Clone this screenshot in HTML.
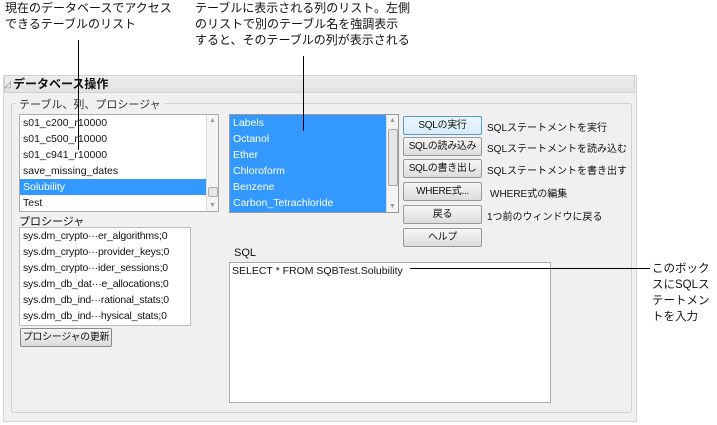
<!DOCTYPE html>
<html><head><meta charset="utf-8"><style>
*{box-sizing:border-box;margin:0;padding:0}
body{width:717px;height:425px;background:#fff;position:relative;overflow:hidden;font-family:"Liberation Sans","Noto Sans CJK JP",sans-serif;font-size:11px;color:#111}
.a{position:absolute}
.ann{font-size:12px;line-height:16px;color:#111;white-space:nowrap}
.vl{position:absolute;width:1px;background:#000}
.list{position:absolute;background:#fff;border:1px solid #aaa;overflow:hidden}
.r{height:16px;line-height:16px;padding-left:3px;white-space:nowrap;overflow:hidden;font-size:10.5px}
.sel{background:#3399ff;color:#fff}
.sb{position:absolute;top:0;right:0;bottom:0;width:12px;background:#f4f4f4;border-left:1px solid #ddd;font-size:7px;color:#999;text-align:center}
.th{position:absolute;left:1px;width:10px;border:1px solid #aaa;background:#e6e6e6;border-radius:2px}
.btn{position:absolute;left:403px;width:79px;height:19px;border:1px solid #999;border-radius:2px;background:linear-gradient(#f6f6f6,#dcdcdc);text-align:center;line-height:17px;font-size:10px;white-space:nowrap;letter-spacing:-0.3px}
.lbl{position:absolute;left:487px;font-size:10px;white-space:nowrap}
</style></head><body>
<div class="a ann" style="left:5px;top:0">現在のデータベースでアクセス<br>できるテーブルのリスト</div>
<div class="a ann" style="left:195px;top:0">テーブルに表示される列のリスト。左側<br>のリストで別のテーブル名を強調表示<br>すると、そのテーブルの列が表示される</div>

<div class="a" style="left:3px;top:75px;width:634px;height:347px;background:#f0f0f0;border:1px solid #d6d6d6"></div>
<div class="a" style="left:4px;top:75px;width:631px;height:18px;background:linear-gradient(#ededed,#e2e2e2);border:1px solid #d0d0d0"></div>
<div class="a" style="left:4px;top:75px;font-size:9px;color:#888;line-height:18px">◿</div>
<div class="a" style="left:13px;top:76px;font-size:12px;font-weight:bold;line-height:16px">データベース操作</div>
<div class="a" style="left:11px;top:103px;width:621px;height:310px;border:1px solid #d0d0d0;border-radius:3px"></div>
<div class="a" style="left:16px;top:96px;background:#f0f0f0;padding:0 3px;font-size:11px;color:#333">テーブル、列、プロシージャ</div>

<div class="list" style="left:19px;top:114px;width:200px;height:98px">
<div class="r">s01_c200_r10000</div><div class="r">s01_c500_r10000</div><div class="r">s01_c941_r10000</div><div class="r">save_missing_dates</div><div class="r sel" style="margin-right:12px">Solubility</div><div class="r">Test</div>
<div class="sb"><div style="margin-top:2px">▲</div><div class="th" style="top:72px;height:10px"></div><div style="position:absolute;bottom:2px;width:11px">▼</div></div>
</div>

<div class="list" style="left:229px;top:114px;width:170px;height:99px;background:#3399ff;border-color:#999">
<div class="r sel">Labels</div><div class="r sel">Octanol</div><div class="r sel">Ether</div><div class="r sel">Chloroform</div><div class="r sel">Benzene</div><div class="r sel">Carbon_Tetrachloride</div>
<div class="sb"><div style="margin-top:2px">▲</div><div class="th" style="top:14px;height:57px"></div><div style="position:absolute;bottom:2px;width:11px">▼</div></div>
</div>

<div class="btn" style="top:116px;border-color:#5a9ec8;background:linear-gradient(#eaf6fd,#d6ecf8)">SQLの実行</div>
<div class="btn" style="top:137px">SQLの読み込み</div>
<div class="btn" style="top:159px">SQLの書き出し</div>
<div class="btn" style="top:182px">WHERE式...</div>
<div class="btn" style="top:205px">戻る</div>
<div class="btn" style="top:228px">ヘルプ</div>
<div class="lbl" style="top:119px">SQLステートメントを実行</div>
<div class="lbl" style="top:140px">SQLステートメントを読み込む</div>
<div class="lbl" style="top:162px">SQLステートメントを書き出す</div>
<div class="lbl" style="top:185px;left:490px">WHERE式の編集</div>
<div class="lbl" style="top:208px">1つ前のウィンドウに戻る</div>

<div class="a" style="left:19px;top:213px;font-size:11px">プロシージャ</div>
<div class="list" style="left:19px;top:227px;width:172px;height:99px;border-color:#bbb">
<div class="r" style="letter-spacing:-0.2px">sys.dm_crypto···er_algorithms;0</div><div class="r" style="letter-spacing:-0.2px">sys.dm_crypto···provider_keys;0</div><div class="r" style="letter-spacing:-0.2px">sys.dm_crypto···ider_sessions;0</div><div class="r" style="letter-spacing:-0.2px">sys.dm_db_dat···e_allocations;0</div><div class="r" style="letter-spacing:-0.2px">sys.dm_db_ind···rational_stats;0</div><div class="r" style="letter-spacing:-0.2px">sys.dm_db_ind···hysical_stats;0</div>
</div>
<div class="a" style="left:20px;top:328px;width:92px;height:19px;border:1px solid #888;border-radius:2px;background:linear-gradient(#f4f4f4,#dcdcdc);font-size:10px;text-align:center;line-height:17px;white-space:nowrap;letter-spacing:-0.3px">プロシージャの更新</div>

<div class="a" style="left:234px;top:247px;font-size:11px">SQL</div>
<div class="a" style="left:229px;top:262px;width:322px;height:141px;background:#fff;border:1px solid #aaa;padding:2px 2px;font-size:10.5px">SELECT * FROM SQBTest.Solubility</div>

<div class="vl" style="left:78px;top:40px;height:110px"></div>
<div class="vl" style="left:303px;top:56px;height:75px"></div>
<div class="a" style="left:410px;top:268px;width:240px;height:1px;background:#000"></div>
<div class="a ann" style="left:652px;top:261px;line-height:16px;font-size:11.5px">このボック<br>スにSQLス<br>テートメン<br>トを入力</div>
</body></html>
